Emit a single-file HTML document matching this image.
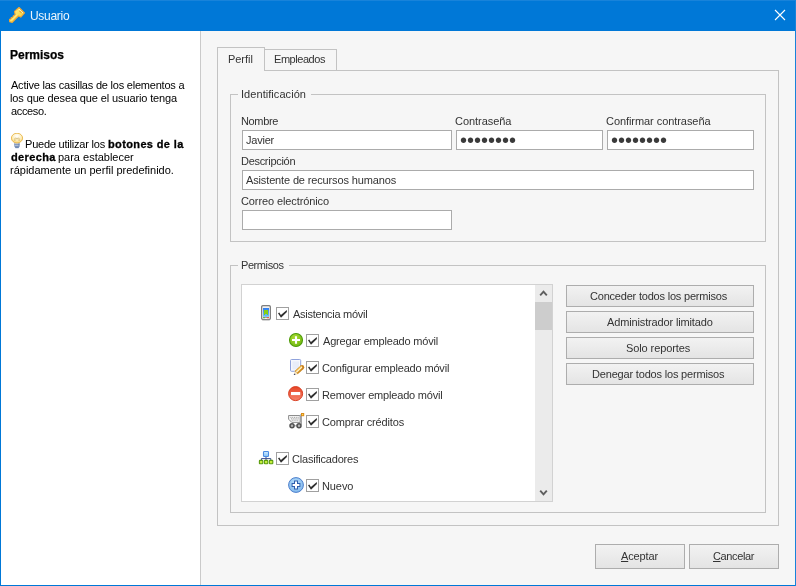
<!DOCTYPE html>
<html lang="es">
<head>
<meta charset="utf-8">
<title>Usuario</title>
<style>
html,body{margin:0;padding:0;}
body{width:796px;height:586px;overflow:hidden;background:#0078d7;font-family:"Liberation Sans",sans-serif;position:relative;}
.abs,.t,.b,svg.i{position:absolute;}
.t{white-space:nowrap;will-change:transform;font-family:"Liberation Sans",sans-serif;}
.t u{text-decoration:underline;text-underline-offset:1px;}
.b{box-sizing:border-box;}
.inp{background:#fff;border:1px solid #ababab;}
.btn{border:1px solid #adadad;background:linear-gradient(#f2f2f2,#e4e4e4);}
.cb{width:13px;height:13px;background:#fff;border:1px solid #a0a0a0;}
.pw{position:absolute;white-space:nowrap;will-change:transform;font-family:"Liberation Sans",sans-serif;font-size:20px;line-height:20px;color:#3a3a3a;}
</style>
</head>
<body>
<!-- title bar -->
<div class="abs" style="left:0;top:0;width:796px;height:31px;background:#0078d7;"></div>
<div class="abs" style="left:0;top:0;width:796px;height:1px;background:#1883da;"></div>
<div class="abs" style="left:795px;top:0;width:1px;height:586px;background:#1883da;"></div>
<!-- client -->
<div class="abs" style="left:1px;top:31px;width:199px;height:554px;background:#fff;"></div>
<div class="abs" style="left:200px;top:31px;width:1px;height:554px;background:#cacaca;"></div>
<div class="abs" style="left:201px;top:31px;width:594px;height:554px;background:#f6f6f6;"></div>

<!-- tab panel -->
<div class="b" style="left:217px;top:70px;width:562px;height:456px;border:1px solid #c3c3c3;"></div>
<div class="b" style="left:264px;top:49px;width:73px;height:22px;border:1px solid #c3c3c3;border-left:none;border-bottom:none;height:21px;"></div>
<div class="b" style="left:217px;top:47px;width:48px;height:24px;border:1px solid #c3c3c3;border-bottom:none;background:#f6f6f6;"></div>

<!-- group boxes -->
<div class="b" style="left:230px;top:94px;width:536px;height:148px;border:1px solid #c3c3c3;"></div>
<div class="abs" style="left:238px;top:94px;width:73px;height:1px;background:#f6f6f6;"></div>
<div class="b" style="left:230px;top:265px;width:536px;height:248px;border:1px solid #c3c3c3;"></div>
<div class="abs" style="left:238px;top:265px;width:51px;height:1px;background:#f6f6f6;"></div>

<!-- inputs -->
<div class="b inp" style="left:242px;top:130px;width:210px;height:20px;"></div>
<div class="b inp" style="left:456px;top:130px;width:147px;height:20px;"></div>
<div class="b inp" style="left:607px;top:130px;width:147px;height:20px;"></div>
<div class="b inp" style="left:242px;top:170px;width:512px;height:20px;"></div>
<div class="b inp" style="left:242px;top:210px;width:210px;height:20px;"></div>
<span class="pw" style="left:460px;top:130px">&#8226;&#8226;&#8226;&#8226;&#8226;&#8226;&#8226;&#8226;</span><span class="pw" style="left:611px;top:130px">&#8226;&#8226;&#8226;&#8226;&#8226;&#8226;&#8226;&#8226;</span>

<!-- tree -->
<div class="b" style="left:241px;top:284px;width:312px;height:218px;border:1px solid #d2d2d2;background:#fff;"></div>
<div class="abs" style="left:535px;top:285px;width:17px;height:216px;background:#ebebeb;"></div>
<div class="abs" style="left:535px;top:302px;width:17px;height:28px;background:#cdcdcd;"></div>
<svg class="i" style="left:535px;top:285px" width="17" height="17" viewBox="0 0 17 17"><path d="M5.2 10.3 L8.5 6.6 L11.8 10.3" fill="none" stroke="#5e5e5e" stroke-width="1.9"/></svg>
<svg class="i" style="left:535px;top:484px" width="17" height="17" viewBox="0 0 17 17"><path d="M5.2 6.7 L8.5 10.4 L11.8 6.7" fill="none" stroke="#5e5e5e" stroke-width="1.9"/></svg>

<div class="b cb" style="left:276px;top:307px"></div><svg class="i" style="left:276px;top:307px" width="13" height="13" viewBox="0 0 13 13"><path d="M2 6.3 L3.3 5.5 L4.9 7.9 L10.8 2.9 L10.9 4.9 L5 10.7 Z" fill="#2e2e2e"/></svg>
<div class="b cb" style="left:306px;top:334px"></div><svg class="i" style="left:306px;top:334px" width="13" height="13" viewBox="0 0 13 13"><path d="M2 6.3 L3.3 5.5 L4.9 7.9 L10.8 2.9 L10.9 4.9 L5 10.7 Z" fill="#2e2e2e"/></svg>
<div class="b cb" style="left:306px;top:361px"></div><svg class="i" style="left:306px;top:361px" width="13" height="13" viewBox="0 0 13 13"><path d="M2 6.3 L3.3 5.5 L4.9 7.9 L10.8 2.9 L10.9 4.9 L5 10.7 Z" fill="#2e2e2e"/></svg>
<div class="b cb" style="left:306px;top:388px"></div><svg class="i" style="left:306px;top:388px" width="13" height="13" viewBox="0 0 13 13"><path d="M2 6.3 L3.3 5.5 L4.9 7.9 L10.8 2.9 L10.9 4.9 L5 10.7 Z" fill="#2e2e2e"/></svg>
<div class="b cb" style="left:306px;top:415px"></div><svg class="i" style="left:306px;top:415px" width="13" height="13" viewBox="0 0 13 13"><path d="M2 6.3 L3.3 5.5 L4.9 7.9 L10.8 2.9 L10.9 4.9 L5 10.7 Z" fill="#2e2e2e"/></svg>
<div class="b cb" style="left:276px;top:452px"></div><svg class="i" style="left:276px;top:452px" width="13" height="13" viewBox="0 0 13 13"><path d="M2 6.3 L3.3 5.5 L4.9 7.9 L10.8 2.9 L10.9 4.9 L5 10.7 Z" fill="#2e2e2e"/></svg>
<div class="b cb" style="left:306px;top:479px"></div><svg class="i" style="left:306px;top:479px" width="13" height="13" viewBox="0 0 13 13"><path d="M2 6.3 L3.3 5.5 L4.9 7.9 L10.8 2.9 L10.9 4.9 L5 10.7 Z" fill="#2e2e2e"/></svg>

<!-- key icon -->
<svg class="i" style="left:9px;top:7px" width="16" height="16" viewBox="0 0 16 16"><defs><linearGradient id="gk" x1="0" y1="0" x2="1" y2="1"><stop offset="0" stop-color="#fff6a8"/><stop offset="0.55" stop-color="#f8dc54"/><stop offset="1" stop-color="#f0bc30"/></linearGradient></defs><path d="M10 0.5 L15.5 6 L11.8 10.1 L9.4 9 L3.2 15.4 L0.6 14.8 L0.5 12.2 L2 12 L2.2 10.6 L3.8 10.4 L4.2 9 L6.2 7.8 L5.5 4.4 Z" fill="url(#gk)" stroke="#f0a432" stroke-width="1.1" stroke-linejoin="round"/><path d="M9.8 2 L13.8 6" stroke="#fffbd8" stroke-width="1" fill="none"/><path d="M10.4 3.8 L12.6 5.8" stroke="#e4a42c" stroke-width="1.1" fill="none"/><path d="M2 13.6 L8 7.6" stroke="#fff3a0" stroke-width="1" fill="none" opacity="0.8"/></svg>
<!-- bulb icon -->
<svg class="i" style="left:11px;top:133px" width="13" height="16" viewBox="0 0 13 16"><defs><radialGradient id="gb" cx="0.5" cy="0.3" r="0.75"><stop offset="0" stop-color="#ffffff"/><stop offset="0.55" stop-color="#feeebb"/><stop offset="1" stop-color="#f9cf60"/></radialGradient></defs><path d="M3.3 9.6 H8.7 V13 L7.8 15 H4.2 L3.3 13 Z" fill="#93a6c6"/><path d="M3.4 11.3 H8.6 M3.6 13.1 H8.4 M4.4 14.7 H7.6" stroke="#5d78a8" stroke-width="0.8"/><path d="M4 10.4 H7.4 M4 12.2 H7.4" stroke="#dfe6f2" stroke-width="0.7"/><ellipse cx="6" cy="5.1" rx="5.6" ry="4.9" fill="url(#gb)" stroke="#e8b548" stroke-width="0.9"/><path d="M3.9 8 L3.9 5.6 L4.7 4.8 L5.5 5.9 L6.5 5.9 L7.3 4.8 L8.1 5.6 L8.1 8" fill="none" stroke="#b89a50" stroke-width="0.6"/></svg>
<!-- phone icon -->
<svg class="i" style="left:261px;top:305px" width="10" height="16" viewBox="0 0 10 16"><defs><linearGradient id="gp" x1="0" y1="0" x2="0" y2="1"><stop offset="0" stop-color="#2f7df0"/><stop offset="1" stop-color="#6cc4ff"/></linearGradient></defs><rect x="0.6" y="0.6" width="8.8" height="14" rx="1.5" fill="#f1f1f1" stroke="#7e7e7e" stroke-width="1.25"/><path d="M1.2 15.4 H8.8" stroke="#cfcfcf" stroke-width="0.8"/><rect x="2" y="3" width="6" height="8.8" fill="url(#gp)"/><path d="M3 5 H7 V10 H6 V9 H4 V10 H3 Z" fill="#86d014"/><rect x="2" y="12.2" width="2" height="1" fill="#4aa820"/><rect x="6" y="12.2" width="2" height="1" fill="#e03a2a"/><rect x="4.2" y="11.8" width="1.6" height="1.2" fill="#8a8a8a"/></svg>
<!-- green plus -->
<svg class="i" style="left:288px;top:332px" width="16" height="16" viewBox="0 0 16 16"><defs><radialGradient id="gg" cx="0.4" cy="0.3" r="0.8"><stop offset="0" stop-color="#a8dc34"/><stop offset="1" stop-color="#6fb60e"/></radialGradient></defs><circle cx="8" cy="8" r="6.5" fill="url(#gg)" stroke="#4c9a08" stroke-width="1.1"/><path d="M4 8 H12 M8 4.2 V11.8" stroke="#fff" stroke-width="2.1" fill="none"/></svg>
<!-- page + pencil -->
<svg class="i" style="left:288px;top:357px" width="18" height="20" viewBox="0 0 18 20"><rect x="2.5" y="2.5" width="10.2" height="11.8" rx="1" fill="#f6f8fd" stroke="#8fa2dc" stroke-width="1"/><rect x="4.4" y="4.4" width="6.6" height="8" fill="#e8edf9"/><path d="M8.2 15.6 L14 10.3" stroke="#d08c22" stroke-width="4.4" fill="none"/><circle cx="14" cy="10.3" r="2.2" fill="#c8801e"/><path d="M8 14.4 L13.8 9" stroke="#f0b84a" stroke-width="1.5" fill="none"/><path d="M8.4 15.3 L14 10.1" stroke="#fff4cc" stroke-width="1.3" fill="none"/><path d="M6.6 14.1 L9.7 17.2 L6.2 17.9 Z" fill="#f1e0bc"/><path d="M6.1 16.4 L7.7 17.6 L5.8 18.1 Z" fill="#16265a"/></svg>
<!-- red minus -->
<svg class="i" style="left:288px;top:386px" width="16" height="16" viewBox="0 0 16 16"><defs><linearGradient id="gr" x1="0" y1="0" x2="0" y2="1"><stop offset="0" stop-color="#e64425"/><stop offset="1" stop-color="#f5836c"/></linearGradient></defs><circle cx="7.6" cy="7.6" r="7" fill="url(#gr)" stroke="#d8391c" stroke-width="1"/><rect x="3" y="6" width="9.2" height="3.1" fill="#fff"/></svg>
<!-- cart -->
<svg class="i" style="left:288px;top:412px" width="17" height="17" viewBox="0 0 17 17"><path d="M0.6 3.5 H12.2 L12.2 10.4 H3.8 L0.6 7.2 Z" fill="#f4f4f4" stroke="#8d8d8d" stroke-width="1"/><path d="M2.4 5.4 H10.8 M3 6.8 H10.8 M3.8 8.2 H10.8" stroke="#9a9a9a" stroke-width="0.9" stroke-dasharray="1 0.8" fill="none"/><path d="M13.2 3 V12.6" stroke="#7d7d7d" stroke-width="1" fill="none"/><path d="M11.6 3.6 L13.6 1.8" stroke="#9fb4d0" stroke-width="1" fill="none"/><rect x="13" y="1" width="3.2" height="3.2" fill="#d9891c"/><rect x="14" y="2" width="1.2" height="1.2" fill="#ffe14a"/><path d="M4 13.8 H11" stroke="#9a9a9a" stroke-width="1"/><circle cx="4" cy="13.8" r="2" fill="#b5b5b5" stroke="#505050" stroke-width="1.5"/><circle cx="11" cy="13.8" r="2" fill="#b5b5b5" stroke="#505050" stroke-width="1.5"/></svg>
<!-- hierarchy -->
<svg class="i" style="left:258px;top:450px" width="16" height="16" viewBox="0 0 16 16"><defs><linearGradient id="gh" x1="0" y1="0" x2="0" y2="1"><stop offset="0" stop-color="#d8efff"/><stop offset="1" stop-color="#7fc0f6"/></linearGradient></defs><rect x="5.5" y="1.5" width="5" height="5" rx="0.8" fill="url(#gh)" stroke="#4b8be2" stroke-width="1.1"/><path d="M8 7 V8.6 M3.4 10 V8.6 H12.8 V10 M8 8.6 V10" stroke="#3b4d90" stroke-width="1" fill="none"/><rect x="1.4" y="10.4" width="3.4" height="3.4" rx="0.6" fill="#c4ee3c" stroke="#5b9c0e" stroke-width="1.1"/><rect x="6.4" y="10.4" width="3.4" height="3.4" rx="0.6" fill="#c4ee3c" stroke="#5b9c0e" stroke-width="1.1"/><rect x="11.4" y="10.4" width="3.4" height="3.4" rx="0.6" fill="#c4ee3c" stroke="#5b9c0e" stroke-width="1.1"/></svg>
<!-- blue plus -->
<svg class="i" style="left:288px;top:477px" width="16" height="16" viewBox="0 0 16 16"><defs><radialGradient id="gbl" cx="0.45" cy="0.35" r="0.8"><stop offset="0" stop-color="#b4dcfa"/><stop offset="1" stop-color="#78b2ea"/></radialGradient></defs><circle cx="8" cy="8" r="7.4" fill="url(#gbl)" stroke="#4d7fcc" stroke-width="1"/><path d="M3.6 8 H12.4 M8 3.6 V12.4" stroke="#2d5eae" stroke-width="4" fill="none" stroke-linejoin="round"/><path d="M4.6 8 H11.4 M8 4.6 V11.4" stroke="#fff" stroke-width="2" fill="none"/></svg>


<!-- buttons -->
<div class="b btn" style="left:566px;top:285px;width:188px;height:22px;"></div>
<div class="b btn" style="left:566px;top:311px;width:188px;height:22px;"></div>
<div class="b btn" style="left:566px;top:337px;width:188px;height:22px;"></div>
<div class="b btn" style="left:566px;top:363px;width:188px;height:22px;"></div>
<div class="b btn" style="left:595px;top:544px;width:90px;height:25px;"></div>
<div class="b btn" style="left:689px;top:544px;width:90px;height:25px;"></div>

<!-- close X -->
<svg class="i" style="left:774px;top:9px" width="12" height="12" viewBox="0 0 12 12"><path d="M1 1 L11 11 M11 1 L1 11" stroke="#fff" stroke-width="1.1" fill="none"/></svg>

<span class="t" style="left:30.0px;top:8.84px;font-size:12px;line-height:14px;font-weight:normal;color:rgba(255,255,255,0.92);letter-spacing:-0.294px;">Usuario</span>
<span class="t" style="left:10.0px;top:47.84px;font-size:12px;line-height:14px;font-weight:bold;color:#000;letter-spacing:-0.004px;-webkit-text-stroke:0.25px #000;">Permisos</span>
<span class="t" style="left:11.0px;top:78.69px;font-size:11px;line-height:13px;font-weight:normal;color:#000;letter-spacing:-0.218px;">Active las casillas de los elementos a</span>
<span class="t" style="left:10.0px;top:91.69px;font-size:11px;line-height:13px;font-weight:normal;color:#000;letter-spacing:-0.122px;">los que desea que el usuario tenga</span>
<span class="t" style="left:11.0px;top:104.69px;font-size:11px;line-height:13px;font-weight:normal;color:#000;letter-spacing:-0.346px;">acceso.</span>
<span class="t" style="left:25.0px;top:137.69px;font-size:11px;line-height:13px;font-weight:normal;color:#000;letter-spacing:-0.210px;">Puede utilizar los</span>
<span class="t" style="left:107.5px;top:137.69px;font-size:11px;line-height:13px;font-weight:bold;color:#000;letter-spacing:0.369px;-webkit-text-stroke:0.3px #000;">botones de la</span>
<span class="t" style="left:11.0px;top:150.69px;font-size:11px;line-height:13px;font-weight:bold;color:#000;letter-spacing:0.371px;-webkit-text-stroke:0.3px #000;">derecha</span>
<span class="t" style="left:58.0px;top:150.69px;font-size:11px;line-height:13px;font-weight:normal;color:#000;letter-spacing:-0.009px;">para establecer</span>
<span class="t" style="left:10.0px;top:163.69px;font-size:11px;line-height:13px;font-weight:normal;color:#000;letter-spacing:0.000px;">rápidamente un perfil predefinido.</span>
<span class="t" style="left:227.6px;top:52.69px;font-size:11px;line-height:13px;font-weight:normal;color:#333;letter-spacing:-0.044px;">Perfil</span>
<span class="t" style="left:274.0px;top:52.69px;font-size:11px;line-height:13px;font-weight:normal;color:#333;letter-spacing:-0.450px;">Empleados</span>
<span class="t" style="left:241.0px;top:87.69px;font-size:11px;line-height:13px;font-weight:normal;color:#333;letter-spacing:0.056px;">Identificación</span>
<span class="t" style="left:241.0px;top:258.69px;font-size:11px;line-height:13px;font-weight:normal;color:#333;letter-spacing:-0.418px;">Permisos</span>
<span class="t" style="left:241.0px;top:114.69px;font-size:11px;line-height:13px;font-weight:normal;color:#333;letter-spacing:-0.354px;">Nombre</span>
<span class="t" style="left:455.0px;top:114.69px;font-size:11px;line-height:13px;font-weight:normal;color:#333;letter-spacing:-0.048px;">Contraseña</span>
<span class="t" style="left:606.0px;top:114.69px;font-size:11px;line-height:13px;font-weight:normal;color:#333;letter-spacing:-0.064px;">Confirmar contraseña</span>
<span class="t" style="left:241.0px;top:154.69px;font-size:11px;line-height:13px;font-weight:normal;color:#333;letter-spacing:-0.297px;">Descripción</span>
<span class="t" style="left:241.0px;top:194.69px;font-size:11px;line-height:13px;font-weight:normal;color:#333;letter-spacing:-0.104px;">Correo electrónico</span>
<span class="t" style="left:246.0px;top:133.69px;font-size:11px;line-height:13px;font-weight:normal;color:#333;letter-spacing:-0.224px;">Javier</span>
<span class="t" style="left:246.0px;top:173.69px;font-size:11px;line-height:13px;font-weight:normal;color:#333;letter-spacing:-0.141px;">Asistente de recursos humanos</span>
<span class="t" style="left:293.0px;top:307.69px;font-size:11px;line-height:13px;font-weight:normal;color:#333;letter-spacing:-0.279px;">Asistencia móvil</span>
<span class="t" style="left:323.0px;top:334.69px;font-size:11px;line-height:13px;font-weight:normal;color:#333;letter-spacing:-0.192px;">Agregar empleado móvil</span>
<span class="t" style="left:322.0px;top:361.69px;font-size:11px;line-height:13px;font-weight:normal;color:#333;letter-spacing:-0.170px;">Configurar empleado móvil</span>
<span class="t" style="left:322.0px;top:388.69px;font-size:11px;line-height:13px;font-weight:normal;color:#333;letter-spacing:-0.187px;">Remover empleado móvil</span>
<span class="t" style="left:322.0px;top:415.69px;font-size:11px;line-height:13px;font-weight:normal;color:#333;letter-spacing:-0.147px;">Comprar créditos</span>
<span class="t" style="left:292.0px;top:452.69px;font-size:11px;line-height:13px;font-weight:normal;color:#333;letter-spacing:-0.200px;">Clasificadores</span>
<span class="t" style="left:322.0px;top:479.69px;font-size:11px;line-height:13px;font-weight:normal;color:#333;letter-spacing:-0.099px;">Nuevo</span>
<span class="t" style="left:590.0px;top:289.69px;font-size:11px;line-height:13px;font-weight:normal;color:#333;letter-spacing:-0.203px;">Conceder todos los permisos</span>
<span class="t" style="left:607.0px;top:315.69px;font-size:11px;line-height:13px;font-weight:normal;color:#333;letter-spacing:-0.142px;">Administrador limitado</span>
<span class="t" style="left:626.0px;top:341.69px;font-size:11px;line-height:13px;font-weight:normal;color:#333;letter-spacing:-0.095px;">Solo reportes</span>
<span class="t" style="left:592.0px;top:367.69px;font-size:11px;line-height:13px;font-weight:normal;color:#333;letter-spacing:-0.180px;">Denegar todos los permisos</span>
<span class="t" style="left:621.0px;top:549.69px;font-size:11px;line-height:13px;font-weight:normal;color:#333;letter-spacing:-0.132px;"><u>A</u>ceptar</span>
<span class="t" style="left:712.7px;top:549.69px;font-size:11px;line-height:13px;font-weight:normal;color:#333;letter-spacing:-0.379px;"><u>C</u>ancelar</span>
</body>
</html>
